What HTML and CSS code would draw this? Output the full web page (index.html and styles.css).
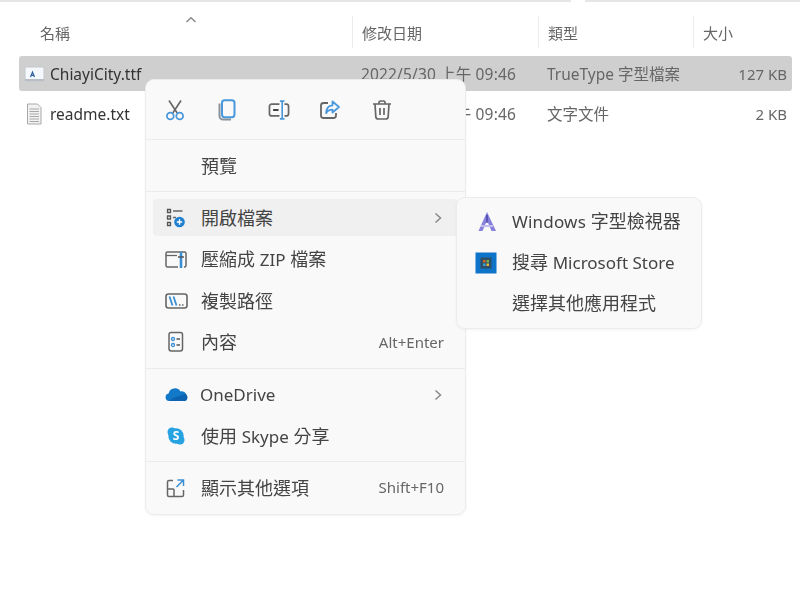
FILE: index.html
```html
<!DOCTYPE html>
<html lang="zh-Hant">
<head>
<meta charset="utf-8">
<title>ChiayiCity</title>
<link rel="stylesheet" href="styles.css">
</head>
<body>
<div class="page">
  <div class="topline"><span class="line-a"></span><span class="line-b"></span></div>
  <div class="columns">
    <div class="col col-name">名稱<svg class="caret" width="14" height="8" viewBox="0 0 14 8"><path d="M2.500 6 7 1.800 11.500 6" fill="none" stroke="#8a8a8a" stroke-width="1.500"/></svg></div>
    <div class="col">修改日期</div>
    <div class="col">類型</div>
    <div class="col">大小</div>
  </div>
  <div class="file selected">
    <div class="fname">
      <svg class="ficon" width="22" height="18" viewBox="0 0 22 18"><rect x="2" y="2" width="19" height="14" fill="#f4f7fb" stroke="#c4c8cc"/><path d="M2 14h19v2H2z" fill="#b9bec4"/><path d="M7.500 12 9.500 7 11.500 12M8.300 10.400h2.400" fill="none" stroke="#2f5f9e" stroke-width="1.200"/></svg>
      <span>ChiayiCity.ttf</span>
    </div>
    <div class="fcell fdate">2022/5/30 上午 09:46</div>
    <div class="fcell">TrueType 字型檔案</div>
    <div class="fcell fsize">127 KB</div>
  </div>
  <div class="file">
    <div class="fname">
      <svg class="ficon" width="22" height="22" viewBox="0 0 22 22"><path d="M4.500 1h10l3.500 3.500V21H4.500z" fill="#f2f2f2" stroke="#a8a8a8"/><path d="M6.500 6h9.500M6.500 8.500h9.500M6.500 11h9.500M6.500 13.500h9.500M6.500 16h9.500M6.500 18.500h9.500" stroke="#a8a8a8"/></svg>
      <span>readme.txt</span>
    </div>
    <div class="fcell fdate">2022/5/30 上午 09:46</div>
    <div class="fcell">文字文件</div>
    <div class="fcell fsize">2 KB</div>
  </div>

  <div class="menu main-menu">
    <div class="toolbar">
      <svg width="22" height="22" viewBox="0 0 22 22" fill="none"><path d="M5 1.500 13.200 14M17 1.500 8.800 14" stroke="#666" stroke-width="1.600"/><circle cx="6.300" cy="17" r="3.400" stroke="#4a98dc" stroke-width="1.800"/><circle cx="15.700" cy="17" r="3.400" stroke="#4a98dc" stroke-width="1.800"/></svg>
      <svg width="22" height="22" viewBox="0 0 22 22" fill="none"><path d="M3.500 4.500v12.500a3.500 3.500 0 0 0 3.500 3.500h8" stroke="#8a939b" stroke-width="2"/><rect x="6" y="1.200" width="12.500" height="17" rx="2.600" stroke="#4a98dc" stroke-width="2"/></svg>
      <svg width="22" height="20" viewBox="0 0 24 22" fill="none"><path d="M12.500 4.500H4a2.500 2.500 0 0 0-2.500 2.500v8A2.500 2.500 0 0 0 4 17.500h8.500M18 4.500h2a2.500 2.500 0 0 1 2.500 2.500v8a2.500 2.500 0 0 1-2.500 2.500h-2" stroke="#666" stroke-width="1.900"/><path d="M5.500 11h6" stroke="#444" stroke-width="2.200"/><path d="M13 1.200h5M13 20.800h5M15.500 1.200v19.600" stroke="#4a98dc" stroke-width="1.800"/></svg>
      <svg width="22" height="22" viewBox="0 0 22 22" fill="none"><path d="M9 4H4.500A2.500 2.500 0 0 0 2 6.500v10A2.500 2.500 0 0 0 4.500 19h10a2.500 2.500 0 0 0 2.500-2.500V14" stroke="#666" stroke-width="1.800"/><path d="M13.500 2.500 20 8l-6.500 5.500V10.600c-3 0-5 1-6.300 3.600 0-4.500 2.300-7.500 6.300-7.800z" stroke="#4a98dc" stroke-width="1.800" stroke-linejoin="round"/></svg>
      <svg width="22" height="22" viewBox="0 0 22 22" fill="none"><path d="M2 5h18M8 5V3.500A1.500 1.500 0 0 1 9.500 2h3A1.500 1.500 0 0 1 14 3.500V5M4 5l.8 12.500A2.500 2.500 0 0 0 7.300 20h7.400a2.500 2.500 0 0 0 2.500-2.500L18 5M9 9v7M13 9v7" stroke="#666" stroke-width="1.700"/></svg>
    </div>
    <div class="group">
      <div class="item"><span class="label">預覽</span></div>
    </div>
    <div class="group">
      <div class="item active">
        <svg class="micon" width="22" height="22" viewBox="0 0 22 22" fill="none"><path d="M3.500 2.500h3v3h-3zM3.500 9h3v3h-3zM3.500 15.500h3v3h-3z" stroke="#555" stroke-width="1.300"/><path d="M9 4h9.500M9 10.500h3" stroke="#666" stroke-width="1.400"/><circle cx="15.500" cy="15" r="5.300" fill="#1f7fd0"/><path d="M15.500 12.300v5.400M12.800 15h5.400" stroke="#fff" stroke-width="1.400"/></svg>
        <span class="label">開啟檔案</span>
        <svg class="chev" width="10" height="12" viewBox="0 0 10 12"><path d="M2.500 1.500 7.500 6l-5 4.500" fill="none" stroke="#888" stroke-width="1.500"/></svg>
      </div>
      <div class="item">
        <svg class="micon" width="24" height="22" viewBox="0 0 24 22" fill="none"><path d="M14 19H3.500A1.500 1.500 0 0 1 2 17.500v-12A1.500 1.500 0 0 1 3.500 4h17A1.500 1.500 0 0 1 22 5.500v12A1.500 1.500 0 0 1 20.500 19H20" stroke="#666" stroke-width="1.500"/><path d="M2 7.500h11" stroke="#666" stroke-width="1.300"/><path d="M17 4v16" stroke="#3a8ed4" stroke-width="2.600"/><path d="M14 9h6" stroke="#555" stroke-width="1.500"/></svg>
        <span class="label">壓縮成 <span class="lat">ZIP</span> 檔案</span>
      </div>
      <div class="item">
        <svg class="micon" width="24" height="20" viewBox="0 0 24 20" fill="none"><rect x="2" y="3" width="21" height="14" rx="2.500" stroke="#666" stroke-width="1.600"/><path d="M5.500 5.500 8.500 14.500M9.500 5.500l3 9" stroke="#3a8ed4" stroke-width="1.800"/><path d="M15 14h1.500M18 14h1.500" stroke="#666" stroke-width="1.400"/></svg>
        <span class="label">複製路徑</span>
      </div>
      <div class="item">
        <svg class="micon" width="22" height="22" viewBox="0 0 22 22" fill="none"><rect x="5" y="1.500" width="13.500" height="18.500" rx="2.200" stroke="#666" stroke-width="1.500"/><circle cx="9" cy="8" r="1.500" stroke="#3a8ed4" stroke-width="1.300"/><circle cx="9" cy="14" r="1.500" stroke="#3a8ed4" stroke-width="1.300"/><path d="M12.500 8h3.500M12.500 14h3.500" stroke="#555" stroke-width="1.400"/></svg>
        <span class="label">內容</span>
        <span class="shortcut">Alt+Enter</span>
      </div>
    </div>
    <div class="group">
      <div class="item">
        <svg class="micon" width="24" height="16" viewBox="0 0 24 16"><path d="M5 15A3.800 3.800 0 0 1 4.600 7.500 6.500 6.500 0 0 1 16.500 5.500a4.800 4.800 0 0 1 2.700 9.500z" fill="#1278c8"/><path d="M5 15h14.500a3.600 3.600 0 0 0 1.500-7L9 12z" fill="#0e63b0"/></svg>
        <span class="label-tight">OneDrive</span>
        <svg class="chev" width="10" height="12" viewBox="0 0 10 12"><path d="M2.500 1.500 7.500 6l-5 4.500" fill="none" stroke="#888" stroke-width="1.500"/></svg>
      </div>
      <div class="item">
        <svg class="micon skype" width="20" height="20" viewBox="0 0 20 20"><circle cx="6" cy="6" r="4.500" fill="#27a3e2"/><circle cx="14" cy="14" r="4.500" fill="#27a3e2"/><circle cx="10" cy="10" r="7.700" fill="#27a3e2"/><text class="skype-s" x="10" y="14.200" text-anchor="middle">S</text></svg>
        <span class="label">使用 <span class="lat">Skype</span> 分享</span>
      </div>
    </div>
    <div class="group last">
      <div class="item">
        <svg class="micon" width="22" height="22" viewBox="0 0 22 22" fill="none"><path d="M9 3.500H5A1.500 1.500 0 0 0 3.500 5v13A1.500 1.500 0 0 0 5 19.500h13a1.500 1.500 0 0 0 1.500-1.500v-5M3.500 12H9a1 1 0 0 1 1 1v6.500" stroke="#666" stroke-width="1.500"/><path d="M13.500 3h6v6M19.500 3l-7 7" stroke="#3a8ed4" stroke-width="1.500"/></svg>
        <span class="label">顯示其他選項</span>
        <span class="shortcut">Shift+F10</span>
      </div>
    </div>
  </div>

  <div class="menu sub-menu">
    <div class="item sub-item">
      <svg class="micon" width="24" height="24" viewBox="0 0 24 24"><path d="M12 2 3.500 21h4L12 10.500 16.500 21H21z" fill="#8781dc"/><path d="M6 16h12" stroke="#c0bcf0" stroke-width="2"/><path d="M12 5v8" stroke="#4a44a8" stroke-width="1.500"/></svg>
      <span class="label"><span class="lat win">Windows</span> 字型檢視器</span>
    </div>
    <div class="item sub-item">
      <svg class="micon" width="22" height="22" viewBox="0 0 22 22"><rect x="0.500" y="0.500" width="21" height="21" fill="#0d74c9"/><rect x="5.500" y="5.500" width="11" height="11" fill="#2f4f66"/><path d="M8 8h2.500v2.500H8z" fill="#d9652b"/><path d="M11.500 8H14v2.500h-2.500z" fill="#7ab648"/><path d="M8 11.500h2.500V14H8z" fill="#36a4d9"/><path d="M11.500 11.500H14V14h-2.500z" fill="#e8b93a"/></svg>
      <span class="label">搜尋 <span class="lat">Microsoft Store</span></span>
    </div>
    <div class="item sub-item">
      <span class="label">選擇其他應用程式</span>
    </div>
  </div>
</div>
</body>
</html>
```

FILE: styles.css
```css
* { box-sizing: border-box; }
html, body { margin: 0; padding: 0; background: #fff; }
body {
  font-family: "Noto Sans", "Noto Sans CJK TC", "Liberation Sans", sans-serif;
  font-size: 15px;
  color: #3c3c3c;
}
.page {
  position: relative;
  width: 800px;
  height: 591px;
  overflow: hidden;
  filter: blur(0.6px);
}
.topline { display: flex; height: 2px; gap: 14px; }
.line-a { width: 571px; background: #e6e6e6; }
.line-b { flex: 1; background: #e6e6e6; }

.columns {
  display: grid;
  grid-template-columns: 333px 186px 155px 104px;
  margin: 14px 0 8px 19px;
  height: 32px;
  color: #666;
  font-size: 15px;
}
.col {
  position: relative;
  display: flex;
  align-items: center;
  padding-left: 9px;
  border-left: 1px solid #ececec;
}
.col-name { border-left: none; padding-left: 21px; }
.caret { position: absolute; left: 165px; top: 0; }

.file {
  display: grid;
  grid-template-columns: 333px 186px 155px 99px;
  align-items: center;
  width: 773px;
  height: 35px;
  margin: 0 0 5px 19px;
  border-radius: 3px;
  color: #666;
  font-size: 15.5px;
}
.selected { background: #cfcfcf; }
.fname {
  display: flex;
  align-items: center;
  gap: 5px;
  padding-left: 4px;
  color: #333;
}
.ficon { flex: none; }
.fcell { padding-left: 9px; white-space: nowrap; }
.fdate { letter-spacing: 0.15px; }
.fsize { padding: 0 5px 0 0; text-align: right; font-size: 15px; }

.menu {
  position: absolute;
  background: #f9f9f9;
  border: 1px solid #ececec;
  border-radius: 9px;
  box-shadow: 0 1px 3px rgba(0, 0, 0, 0.05);
}
.main-menu {
  left: 145px;
  top: 79px;
  width: 321px;
  height: 436px;
  display: flex;
  flex-direction: column;
}
.toolbar {
  display: flex;
  align-items: center;
  gap: 29.75px;
  height: 60px;
  padding-left: 18px;
  border-bottom: 1px solid #ececec;
}
.toolbar svg { flex: none; }
.group {
  display: flex;
  flex-direction: column;
  gap: 4.5px;
  padding: 7px 7px;
  border-bottom: 1px solid #ececec;
}
.group.last { border-bottom: none; }
.item {
  display: flex;
  align-items: center;
  position: relative;
  height: 37px;
  border-radius: 4px;
  padding-left: 48px;
  color: #444;
  font-size: 18px;
  line-height: 1;
}
.active { background: #f0f0f0; }
.micon { position: absolute; left: 11px; top: 50%; transform: translateY(-50%); }
.label { white-space: nowrap; }
.lat { font-size: 17px; }
.win { letter-spacing: 0.2px; }
.label-tight { margin-left: -1px; font-size: 17px; }
.chev { position: absolute; right: 15px; top: 13px; }
.shortcut {
  position: absolute;
  right: 14px;
  font-size: 15px;
  color: #666;
}
.skype { left: 13px; }
.skype-s { font-size: 12px; font-weight: 700; fill: #fff; }

.sub-menu {
  left: 456px;
  top: 197px;
  width: 246px;
  height: 132px;
  padding: 6px 0;
  display: flex;
  flex-direction: column;
  gap: 4px;
}
.sub-item { padding-left: 55px; }
.sub-item .micon { left: 18px; }
.sub-item .label { margin-top: -2px; }
```
